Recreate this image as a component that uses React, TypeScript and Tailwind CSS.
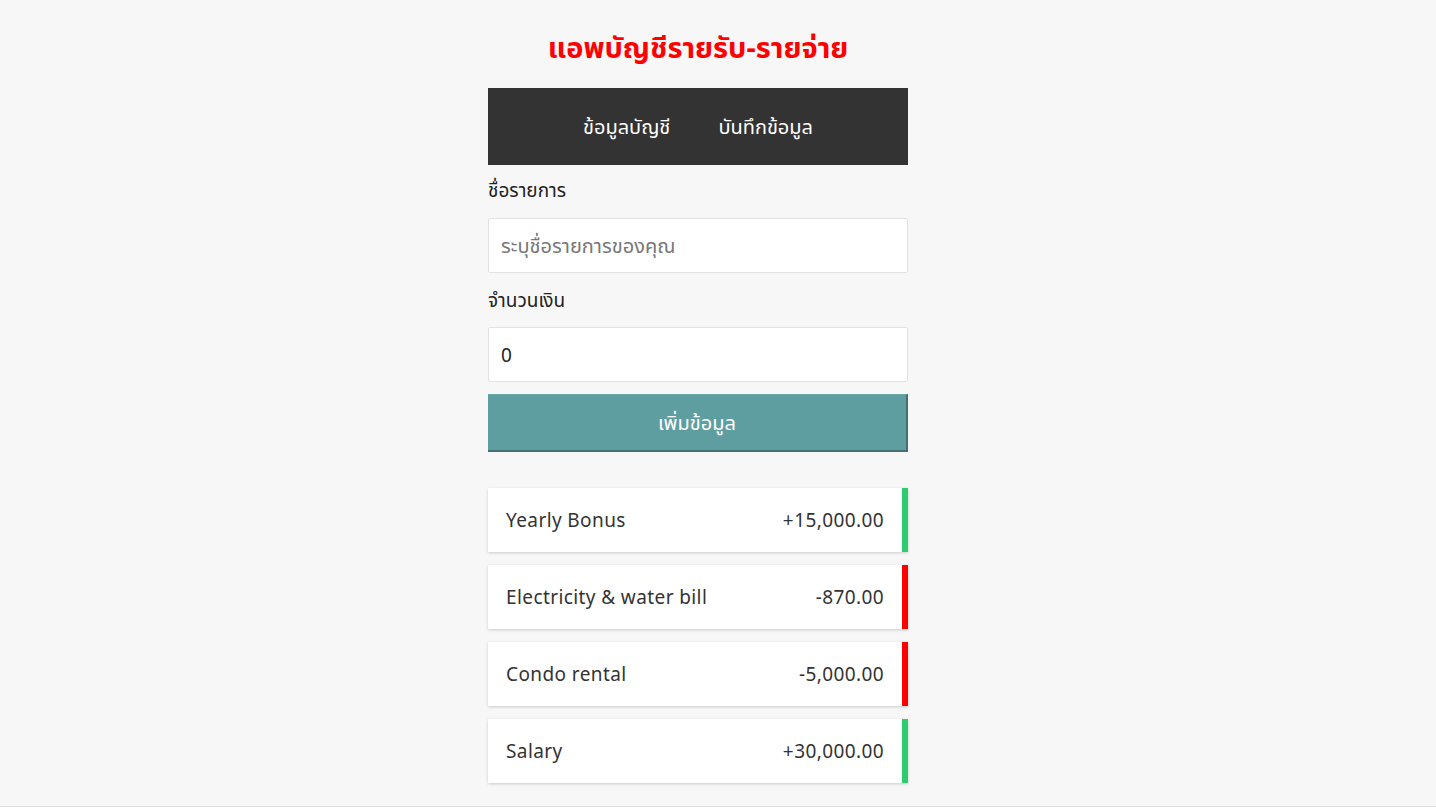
import React from 'react';

type Item = { title: string; amount: number };

const items: Item[] = [
    { title: 'Yearly Bonus', amount: 15000 },
    { title: 'Electricity & water bill', amount: -870 },
    { title: 'Condo rental', amount: -5000 },
    { title: 'Salary', amount: 30000 },
];

function fmt(n: number) {
    const s = Math.abs(n).toLocaleString('en-US', { minimumFractionDigits: 2, maximumFractionDigits: 2 });
    return (n < 0 ? '-' : '+') + s;
}

export default function App() {
    return (
        <div className="h-[807px] overflow-hidden bg-[#f7f7f7] border-b border-[#dcdcdc] font-['Noto_Sans','Noto_Sans_Thai',sans-serif] text-[#333] pr-[40px]">
            <div className="w-[420px] mx-auto flex flex-col">
                {/* Header */}
                <h1 className="h-[88px] pt-[26px] text-center text-[29px] leading-[42px] font-bold text-[#ff0000]">
                    แอพบัญชีรายรับ-รายจ่าย
                </h1>

                <nav className="h-[77px] bg-[#333333] flex items-center justify-center gap-[48px] text-white text-[20px]">
                    <span>ข้อมูลบัญชี</span>
                    <span>บันทึกข้อมูล</span>
                </nav>

                {/* Form */}
                <form className="flex flex-col" onSubmit={(e) => e.preventDefault()}>
                    <label className="mt-[12px] h-[26px] text-[19px] leading-[26px] text-[#222]">ชื่อรายการ</label>
                    <input
                        type="text"
                        placeholder="ระบุชื่อรายการของคุณ"
                        className="mt-[15px] h-[55px] bg-white border border-[#e2e2e2] rounded-[2px] px-[12px] text-[20px] text-[#333] placeholder:text-[#777] outline-none"
                    />
                    <label className="mt-[14px] h-[26px] text-[19px] leading-[26px] text-[#222]">จำนวนเงิน</label>
                    <input
                        type="text"
                        defaultValue="0"
                        className="mt-[14px] h-[55px] bg-white border border-[#e2e2e2] rounded-[2px] px-[12px] text-[19px] text-[#222] outline-none"
                    />
                    <button
                        type="submit"
                        className="mt-[12px] h-[58px] bg-[#5f9ea0] text-white text-[20px] border-r-2 border-b-2 border-[#466f70] border-t border-t-[#6aa9ab]"
                    >
                        เพิ่มข้อมูล
                    </button>
                </form>

                {/* List */}
                <ul className="mt-[36px] flex flex-col gap-[13px]">
                    {items.map((it) => (
                        <li
                            key={it.title}
                            className={
                                'h-[64px] bg-white flex items-center justify-between pl-[18px] pr-[18px] shadow-[0_1px_3px_rgba(0,0,0,0.18)] border-r-[6px] text-[19px] tracking-[0.4px] text-[#333] ' +
                                (it.amount < 0 ? 'border-r-[#ff0000]' : 'border-r-[#2ecc71]')
                            }
                        >
                            <span>{it.title}</span>
                            <span>{fmt(it.amount)}</span>
                        </li>
                    ))}
                </ul>
            </div>
        </div>
    );
}
